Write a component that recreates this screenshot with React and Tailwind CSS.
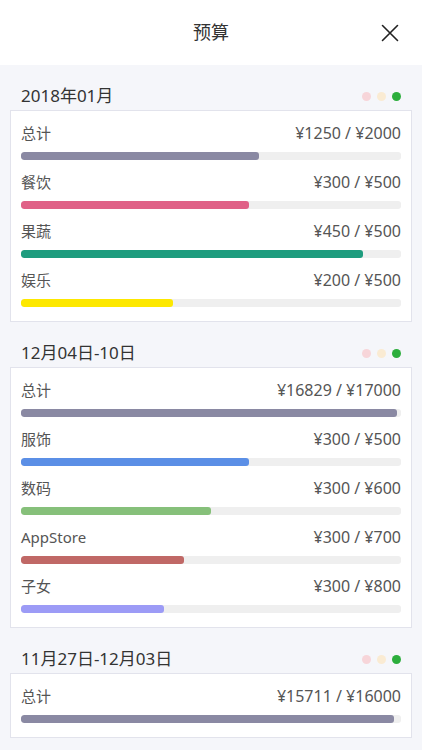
const sections = [
  {
    title: '2018年01月',
    items: [
      { name: '总计', spent: 1250, budget: 2000, color: 'bg-[#8a89a3]' },
      { name: '餐饮', spent: 300, budget: 500, color: 'bg-[#e06187]' },
      { name: '果蔬', spent: 450, budget: 500, color: 'bg-[#1e9c7e]' },
      { name: '娱乐', spent: 200, budget: 500, color: 'bg-[#fde800]' },
    ],
  },
  {
    title: '12月04日-10日',
    items: [
      { name: '总计', spent: 16829, budget: 17000, color: 'bg-[#8a89a3]' },
      { name: '服饰', spent: 300, budget: 500, color: 'bg-[#5b8fe6]' },
      { name: '数码', spent: 300, budget: 600, color: 'bg-[#86c07a]' },
      { name: 'AppStore', spent: 300, budget: 700, color: 'bg-[#c06866]' },
      { name: '子女', spent: 300, budget: 800, color: 'bg-[#9c9bf6]' },
    ],
  },
  {
    title: '11月27日-12月03日',
    items: [
      { name: '总计', spent: 15711, budget: 16000, color: 'bg-[#8a89a3]' },
    ],
  },
];

const font = { fontFamily: '"Noto Sans", "Noto Sans CJK SC", sans-serif' };

const BudgetRow = ({ item }) => {
  const pct = Math.min(100, (item.spent / item.budget) * 100);
  return (
    <div>
      <div className="flex items-center justify-between h-[22px] text-[#555]">
        <span className="text-[15px]">{item.name}</span>
        <span className="text-[16px]">
          ¥{item.spent} / ¥{item.budget}
        </span>
      </div>
      <div className="mt-2 h-2 rounded-[3px] bg-[#efefef] overflow-hidden">
        <div className={`h-full rounded-[3px] ${item.color}`} style={{ width: `${pct}%` }} />
      </div>
    </div>
  );
};

const Section = ({ section }) => (
  <div className="pt-[19px]">
    {/* Title */}
    <div className="flex items-center justify-between h-6 px-[11px]">
      <span className="text-[17px] text-[#333]">{section.title}</span>
      <div className="flex items-center gap-[6px]">
        <span className="w-[9px] h-[9px] rounded-full bg-[#f7d5d9]" />
        <span className="w-[9px] h-[9px] rounded-full bg-[#faebd3]" />
        <span className="w-[9px] h-[9px] rounded-full bg-[#2cae3c]" />
      </div>
    </div>

    {/* Card */}
    <div className="mt-[2px] bg-white border border-[#e2e3ec] px-[10px] pt-[11px] pb-[14px] flex flex-col gap-[11px]">
      {section.items.map((item) => (
        <BudgetRow key={item.name} item={item} />
      ))}
    </div>
  </div>
);

export default function App() {
  return (
    <div className="w-[422px] h-[750px] overflow-hidden bg-[#f5f6fa]" style={font}>
      {/* Header */}
      <div className="relative h-[65px] bg-white flex items-center justify-center">
        <span className="text-[18px] text-[#333]">预算</span>
        <button className="absolute right-[22px] top-[23px] w-5 h-5 flex items-center justify-center">
          <svg width="18" height="18" viewBox="0 0 18 18" fill="none" stroke="#222" strokeWidth="1.6" strokeLinecap="round">
            <path d="M1.5 1.5 L16.5 16.5 M16.5 1.5 L1.5 16.5" />
          </svg>
        </button>
      </div>

      <div className="px-[10px]">
        {sections.map((s) => (
          <Section key={s.title} section={s} />
        ))}
      </div>
    </div>
  );
}
